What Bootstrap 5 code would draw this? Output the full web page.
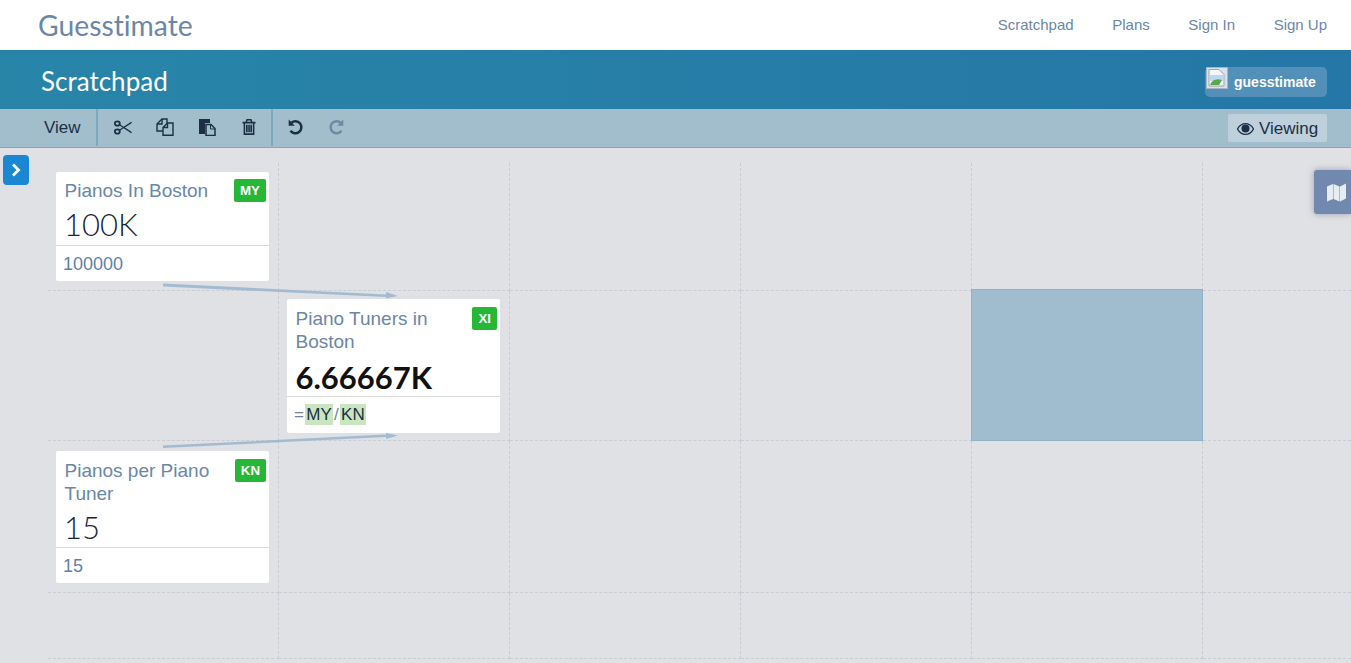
<!DOCTYPE html>
<html lang="en">
<head>
<meta charset="utf-8">
<title>Guesstimate</title>
<link href="https://cdn.jsdelivr.net/npm/bootstrap@5.3.0/dist/css/bootstrap.min.css" rel="stylesheet">
<style>
html,body{height:663px;overflow:hidden}
body{background:#e0e1e5;font-family:"Liberation Sans",Arial,sans-serif;position:relative}
.top-nav{height:50px;background:#fff;padding:0 24px 0 38px}
.brand-name{font-family:Lato,sans-serif;font-size:28.300px;color:#6a87a8;line-height:50px;text-decoration:none;font-variant-ligatures:none}
.top-links{gap:38.6px}
.top-links a{font-size:15px;color:#6a87a8;text-decoration:none}
.space-band{height:59px;background:linear-gradient(90deg,#2885a8,#2477a6);padding:0 24px 0 41px}
.space-title{font-family:Lato,sans-serif;font-size:26px;color:#fff;margin:5px 0 0;font-weight:400}
.owner-chip{height:30px;width:122px;background:#5390b9;border-radius:5px;color:#fff;font-weight:700;font-size:14px;margin-top:5px;position:relative}
.owner-chip svg{position:absolute;left:1px;top:0}
.owner-chip span{margin-left:29px}
.tool-band{height:39px;background:#a2becd;border-bottom:1px solid #7ea7c0;padding-right:24px}
.view-label{width:98px;height:37px;padding-left:44px;font-size:17px;color:#1b2f45;border-right:2px solid #7ea7c0;line-height:38px}
.icon-group{width:175px;height:37px;border-right:2px solid #7ea7c0;padding-left:4px}
.tool-ico{width:42px;height:36px;display:flex;align-items:center;justify-content:center;color:#1b2f45}
.redo-ico{color:#6e8aa3;margin-left:-2.500px}
.undo-group{padding-left:2px}
.viewing-chip{height:28px;width:99px;background:#bdd0dc;border-radius:2px;color:#1b2f45;font-size:17px;gap:5px;margin-top:5px;padding-top:1px}
.board{display:grid;grid-template-columns:repeat(5,231px) 1fr;grid-template-rows:128px 150px 152px 66px;margin:15px 0 0 48px;position:relative}
.cell-box{border-right:1px dashed #c9ccd2;border-bottom:1px dashed #c9ccd2;padding:8px 0 0 8px;min-width:0}
.cell-box.end-col{border-right:0}
.cell-box.row-one{padding-top:9px}
.cell-box.row-three{padding-top:10px}
.cell-picked{background:#a0bdd0;outline:1px solid #8fb1c9;outline-offset:-1px;margin:-2px 0 0 -1px}
.metric-tile{width:213px;background:#fff;border-radius:2px;position:relative}
.tile-name{font-size:19px;line-height:23px;color:#6a87a8;padding:8px 44px 0 8.500px}
.tile-tag{position:absolute;right:3px;top:8px;height:23px;padding:0 6px;background:#25b735;color:#fff;font-weight:700;font-size:13.300px;line-height:23px;border-radius:2px}
.tile-value{font-family:Lato,sans-serif;font-size:31px;line-height:42px;color:#16263a;padding:1px 0 0 8px;font-weight:300;border-bottom:1px solid #d9d9dc;height:43px}
.tile-value.is-strong{font-weight:700;color:#111;padding:3px 0 0 8.500px;height:44px}
.tile-formula{font-size:18px;line-height:20px;color:#5f82a8;padding:8px 7px 7px}
.tile-formula.has-refs{font-size:17px;line-height:21px;padding:7px 6px 8px}
.ref-hit{display:inline-block;background:#c9e6c1;color:#1b2f45;padding:0 1.300px}
.ref-sep{color:#6a87a8;margin:0 1px}
.is-first .tile-name{padding-top:7px}
.is-first .tile-tag{top:7px}
.is-first .tile-value{height:44px}
.arrow-layer{position:absolute;left:0;top:0;pointer-events:none}
.side-toggle{position:absolute;left:3px;top:155px;width:26px;height:30px;background:#1a87d3;border-radius:4px;display:flex;align-items:center;justify-content:center}
.map-tab{position:absolute;right:0;top:170px;width:37px;height:44px;background:#7189ae;border-radius:3px 0 0 3px;box-shadow:0 0 6px rgba(90,100,120,.55);display:flex;align-items:center;justify-content:flex-end;padding-right:5px}
</style>
</head>
<body>
<nav class="top-nav d-flex justify-content-between align-items-center">
  <a class="brand-name" href="#">Guesstimate</a>
  <div class="top-links d-flex">
    <a href="#">Scratchpad</a><a href="#">Plans</a><a href="#">Sign In</a><a href="#">Sign Up</a>
  </div>
</nav>
<header class="space-band d-flex justify-content-between align-items-center">
  <h1 class="space-title">Scratchpad</h1>
  <div class="owner-chip d-flex align-items-center">
    <svg width="22" height="22" viewBox="0 0 22 22"><rect x=".5" y=".5" width="21" height="21" fill="#d9e2ea" stroke="#a9b4c0"/><path d="M3 2.500h10l5 5V19H3z" fill="#f4f7fa" stroke="#9aa5b0"/><path d="M4 8h13v6H4z" fill="#bcd8ef"/><path d="M4 18c2-5 6-7 12-5l-3 5z" fill="#5aa84a"/></svg>
    <span>guesstimate</span>
  </div>
</header>
<div class="tool-band d-flex align-items-start justify-content-between">
  <div class="d-flex">
    <div class="view-label">View</div>
    <div class="icon-group d-flex">
      <span class="tool-ico"><svg width="18" height="15" viewBox="0 0 18 15" fill="none" stroke="currentColor"><ellipse cx="3.300" cy="3.500" rx="2.500" ry="2.200" stroke-width="1.800"/><ellipse cx="3.300" cy="11.500" rx="2.500" ry="2.200" stroke-width="1.800"/><path d="M5.500 4.800 17.500 12.800M5.500 10.200 17.500 2.200" stroke-width="1.200"/><path d="M10 7.500 17.500 3M10 7.500 17.500 12" stroke-width=".6"/></svg></span>
      <span class="tool-ico"><svg width="18" height="18" viewBox="0 0 18 18" fill="none" stroke="currentColor" stroke-width="1.400"><path d="M7 13H1V6L6 1h5v4"/><path d="M6 1v5H1"/><path d="M7 9.500 11.500 5H17v12.300H7z"/><path d="M11.500 5v4.500H7"/></svg></span>
      <span class="tool-ico"><svg width="18" height="18" viewBox="0 0 18 18"><path d="M1 1h11v4H7v11H1z" fill="currentColor"/><path d="M8 6.500h5l4 4v7H8z" fill="#a2becd" stroke="currentColor" stroke-width="1.500"/><path d="M12.500 6.500v4.500H17" fill="none" stroke="currentColor"/></svg></span>
      <span class="tool-ico"><svg width="14" height="16" viewBox="0 0 15 17" fill="currentColor"><path d="M.5 3h14v1.800H13.300V17H1.700V4.800H.5zM3.400 4.800V15.300h8.200V4.800zM4.300 6h1.800v8H4.300zM6.700 6h1.700v8H6.700zM8.900 6h1.800v8H8.900zM3.800 3l1-3h5.400l1 3H9.500L9 1.500H6L5.500 3z"/></svg></span>
    </div>
    <div class="undo-group d-flex">
      <span class="tool-ico"><svg width="16" height="16" viewBox="0 0 16 16" fill="none" stroke="currentColor" stroke-width="2.500"><path d="M3.300 3.800A6 6 0 1 1 2.500 11.700"/><path d="M.7 .6V6.800H6.800z" fill="currentColor" stroke="none"/></svg></span>
      <span class="tool-ico redo-ico"><svg width="16" height="16" viewBox="0 0 16 16" fill="none" stroke="currentColor" stroke-width="2.500"><path d="M12.700 3.800A6 6 0 1 0 13.500 11.700"/><path d="M15.300 .6V6.800H9.200z" fill="currentColor" stroke="none"/></svg></span>
    </div>
  </div>
  <div class="viewing-chip d-flex align-items-center justify-content-center">
    <svg width="17" height="12" viewBox="0 0 17 12"><path d="M.5 6C2.500 2.500 5.300 .7 8.500 .7S14.500 2.500 16.500 6c-2 3.500-4.800 5.300-8 5.300S2.500 9.500.5 6z" fill="none" stroke="currentColor" stroke-width="1.300"/><circle cx="8.500" cy="5.500" r="4" fill="currentColor"/></svg>
    <span>Viewing</span>
  </div>
</div>
<main class="board">
  <div class="cell-box row-one"><div class="metric-tile is-first">
    <div class="tile-name">Pianos In Boston</div><span class="tile-tag">MY</span>
    <div class="tile-value">100K</div>
    <div class="tile-formula">100000</div>
  </div></div>
  <div class="cell-box"></div><div class="cell-box"></div><div class="cell-box"></div><div class="cell-box"></div><div class="cell-box end-col"></div>
  <div class="cell-box"></div>
  <div class="cell-box"><div class="metric-tile">
    <div class="tile-name">Piano Tuners in Boston</div><span class="tile-tag">XI</span>
    <div class="tile-value is-strong">6.66667K</div>
    <div class="tile-formula has-refs"><span class="ref-sep">=</span><span class="ref-hit">MY</span><span class="ref-sep">/</span><span class="ref-hit">KN</span></div>
  </div></div>
  <div class="cell-box"></div><div class="cell-box"></div><div class="cell-box cell-picked"></div><div class="cell-box end-col"></div>
  <div class="cell-box row-three"><div class="metric-tile">
    <div class="tile-name">Pianos per Piano Tuner</div><span class="tile-tag">KN</span>
    <div class="tile-value">15</div>
    <div class="tile-formula">15</div>
  </div></div>
  <div class="cell-box"></div><div class="cell-box"></div><div class="cell-box"></div><div class="cell-box"></div><div class="cell-box end-col"></div>
  <div class="cell-box"></div><div class="cell-box"></div><div class="cell-box"></div><div class="cell-box"></div><div class="cell-box"></div><div class="cell-box end-col"></div>
</main>
<svg class="arrow-layer" width="1351" height="663" viewBox="0 0 1351 663">
  <g fill="#a3bbd0"><path d="M163 283.500 386 294.500 386 292 398 296 386 298.500 386 297 163 286.500z"/><path d="M163 445.500 386 434.500 386 433 398 435.500 386 439 386 437 163 448z"/></g>
</svg>
<button class="side-toggle border-0 p-0" aria-label="Expand"><svg width="10" height="14" viewBox="0 0 10 14" fill="none" stroke="#fff" stroke-width="2.800"><path d="M2 1.500 7.500 7 2 12.500"/></svg></button>
<div class="map-tab"><svg width="19" height="19" viewBox="0 0 19 19" fill="#e6eef4"><path d="M0 3.500 6 1v15l-6 2.500zM6.500 1l6 2.500v15l-6-2.500zM13 3.500 19 .5v15l-6 3z"/></svg></div>
</body>
</html>
